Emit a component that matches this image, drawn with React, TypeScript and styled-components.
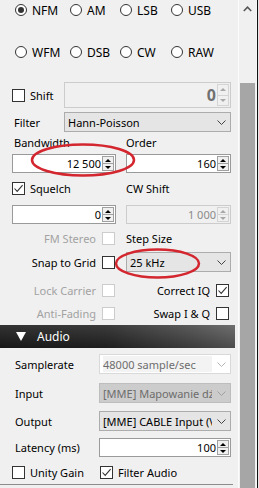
import React, { ReactElement } from 'react'
import styled, { createGlobalStyle } from 'styled-components'

const GlobalStyle = createGlobalStyle`
  html, body {
    margin: 0;
    padding: 0;
    background: #f0f0f0;
  }
  body {
    font-family: 'Noto Sans', 'Open Sans', sans-serif;
    font-size: 11px;
    color: #000;
  }
`

const Window = styled.div`
  width: 259px;
  height: 488px;
  display: flex;
  overflow: hidden;
  background: #f0f0f0;
`

const Panel = styled.div`
  position: relative;
  width: 238px;
  display: flex;
  flex-direction: column;
`

const Row = styled.div<{ $top: number; $h: number }>`
  margin-top: ${(p) => p.$top}px;
  height: ${(p) => p.$h}px;
  flex-shrink: 0;
`

const RadioRow = styled(Row)`
  display: grid;
  grid-template-columns: 55px 50px 51px 1fr;
  align-items: center;
  padding-left: 15px;
  font-size: 12px;
`

const RadioItem = styled.div`
  display: flex;
  align-items: center;
  gap: 5px;
  white-space: nowrap;
`

const RadioCircle = styled.span<{ $checked?: boolean }>`
  box-sizing: border-box;
  width: 12px;
  height: 12px;
  border: 1px solid #333;
  border-radius: 50%;
  background: #fff;
  display: inline-flex;
  align-items: center;
  justify-content: center;
  &::after {
    content: '';
    display: ${(p) => (p.$checked ? 'block' : 'none')};
    width: 6px;
    height: 6px;
    border-radius: 50%;
    background: #333;
  }
`

const ShiftRow = styled(Row)`
  display: grid;
  grid-template-columns: 52px 167px;
  padding-left: 12px;
`

const FilterRow = styled(Row)`
  display: grid;
  grid-template-columns: 52px 167px;
  padding-left: 12px;
  align-items: center;
`

const Pair = styled(Row)`
  display: grid;
  grid-template-columns: 104px 105px;
  column-gap: 10px;
  padding-left: 12px;
  align-items: center;
`

const FieldLabel = styled.span<{ $inset?: number; $muted?: boolean }>`
  padding-left: ${(p) => p.$inset ?? 0}px;
  color: ${(p) => (p.$muted ? '#a2a2a2' : '#000')};
  white-space: nowrap;
`

const CheckLabel = styled.label`
  display: flex;
  align-items: center;
  gap: 5px;
  white-space: nowrap;
`

const RightCheck = styled.label<{ $inset: number }>`
  display: flex;
  align-items: center;
  justify-content: flex-end;
  gap: 6px;
  padding-right: ${(p) => p.$inset}px;
  white-space: nowrap;
`

const CheckBox = styled.span<{ $disabled?: boolean }>`
  box-sizing: border-box;
  width: 13px;
  height: 13px;
  flex-shrink: 0;
  border: 1px solid ${(p) => (p.$disabled ? '#cccccc' : '#333')};
  background: #fff;
  display: inline-flex;
  align-items: center;
  justify-content: center;
`

const NumField = styled.div<{ $disabled?: boolean }>`
  box-sizing: border-box;
  height: 100%;
  display: flex;
  align-items: stretch;
  border: 1px solid ${(p) => (p.$disabled ? '#cccccc' : '#9a9a9a')};
  background: ${(p) => (p.$disabled ? '#f0f0f0' : '#fff')};
  padding: 1px;
`

const NumValue = styled.span<{ $disabled?: boolean; $big?: boolean }>`
  flex: 1;
  display: flex;
  align-items: center;
  justify-content: flex-end;
  padding-right: 1px;
  color: ${(p) => (p.$big ? '#707070' : p.$disabled ? '#8a8a8a' : '#000')};
  font-size: ${(p) => (p.$big ? '16px' : '11px')};
  font-weight: ${(p) => (p.$big ? 700 : 400)};
`

const Spinner = styled.div<{ $disabled?: boolean }>`
  width: 12px;
  display: flex;
  flex-direction: column;
  border: 1px solid ${(p) => (p.$disabled ? '#d4d4d4' : '#a0a0a0')};
  background: #f0f0f0;
  box-sizing: border-box;
`

const SpinHalf = styled.div<{ $disabled?: boolean; $down?: boolean }>`
  flex: 1;
  display: flex;
  align-items: center;
  justify-content: center;
  ${(p) => (p.$down ? '' : `border-bottom: 1px solid ${p.$disabled ? '#d4d4d4' : '#a0a0a0'};`)}
  &::after {
    content: '';
    width: 0;
    height: 0;
    border-left: 3px solid transparent;
    border-right: 3px solid transparent;
    ${(p) =>
      p.$down
        ? `border-top: 3px solid ${p.$disabled ? '#a8a8a8' : '#000'};`
        : `border-bottom: 3px solid ${p.$disabled ? '#a8a8a8' : '#000'};`}
  }
`

const Combo = styled.div<{ $variant?: 'normal' | 'disabled' | 'soft' }>`
  box-sizing: border-box;
  height: 100%;
  display: flex;
  align-items: center;
  padding-left: 3px;
  overflow: hidden;
  white-space: nowrap;
  border: 1px solid
    ${(p) => (p.$variant === 'disabled' ? '#bdbdbd' : p.$variant === 'soft' ? '#d9d9d9' : '#acacac')};
  background: ${(p) => (p.$variant === 'disabled' ? '#cccccc' : p.$variant === 'soft' ? '#fff' : '#e5e5e5')};
  color: ${(p) => (p.$variant === 'normal' || !p.$variant ? '#000' : '#6d6d6d')};
`

const ComboText = styled.span<{ $shaded?: boolean }>`
  flex: 1;
  overflow: hidden;
  align-self: stretch;
  display: flex;
  align-items: center;
  margin: 1px 0;
  background: ${(p) => (p.$shaded ? '#f3f3f3' : 'transparent')};
`

const ComboArrow = styled.span`
  width: 18px;
  display: flex;
  align-items: center;
  justify-content: center;
  flex-shrink: 0;
`

const AudioHeader = styled.div`
  margin-top: 3px;
  margin-right: 3px;
  height: 23px;
  flex-shrink: 0;
  display: flex;
  align-items: center;
  gap: 11px;
  padding-left: 16px;
  color: #fff;
  font-size: 12px;
  background: linear-gradient(180deg, rgba(255, 255, 255, 0.1), rgba(0, 0, 0, 0.18)),
    linear-gradient(90deg, #1c1c1c 0%, #252525 45%, #474747 80%, #5e5e5e 100%);
`

const Triangle = styled.span`
  width: 0;
  height: 0;
  border-left: 5px solid transparent;
  border-right: 5px solid transparent;
  border-top: 9px solid #fff;
`

const AudioRow = styled(Row)`
  display: grid;
  grid-template-columns: 87px 132px;
  padding-left: 12px;
  align-items: center;
`

const BottomRow = styled(Row)`
  display: grid;
  grid-template-columns: 88px 1fr;
  padding-left: 12px;
  align-items: center;
`

const BottomLine = styled.div`
  margin-top: 3px;
  margin-right: 5px;
  border-top: 1px solid #8c8c8c;
`

const Marks = styled.svg`
  position: absolute;
  left: 0;
  top: 0;
  pointer-events: none;
`

const ScrollBar = styled.div`
  width: 17px;
  display: flex;
  flex-direction: column;
  border-left: 1px solid #fbfbfb;
  background: #f0f0f0;
`

const ScrollArrow = styled.div`
  height: 17px;
  display: flex;
  align-items: center;
  justify-content: center;
  flex-shrink: 0;
`

const ScrollTrack = styled.div`
  flex: 1;
  padding-top: 66px;
  display: flex;
`

const ScrollThumb = styled.div`
  flex: 1;
  margin: 0 1px;
  background: #a6a6a6;
`

const Edge = styled.div`
  width: 3px;
  background: linear-gradient(90deg, #f7f7f7 0 1px, #111 1px 2px, #e8e8e8 2px);
`

const Radio = ({ label, checked }: { label: string; checked?: boolean }): ReactElement => (
  <RadioItem>
    <RadioCircle $checked={checked} />
    {label}
  </RadioItem>
)

const Check = ({ checked, disabled }: { checked?: boolean; disabled?: boolean }): ReactElement => (
  <CheckBox $disabled={disabled}>
    {checked && (
      <svg width="11" height="11" viewBox="0 0 11 11">
        <path d="M1.5 5.5 L4.2 8.4 L9.6 2.2" fill="none" stroke="#333" strokeWidth="1.1" />
      </svg>
    )}
  </CheckBox>
)

const Num = ({ value, disabled, big }: { value: string; disabled?: boolean; big?: boolean }): ReactElement => (
  <NumField $disabled={disabled}>
    <NumValue $disabled={disabled} $big={big}>
      {value}
    </NumValue>
    <Spinner $disabled={disabled}>
      <SpinHalf $disabled={disabled} />
      <SpinHalf $disabled={disabled} $down />
    </Spinner>
  </NumField>
)

const Chevron = ({ color = '#444' }: { color?: string }): ReactElement => (
  <svg width="9" height="5" viewBox="0 0 9 5">
    <path d="M0.5 0.5 L4.5 4.5 L8.5 0.5" fill="none" stroke={color} strokeWidth="1" />
  </svg>
)

const Select = ({
  value,
  variant = 'normal',
  arrow
}: {
  value: string
  variant?: 'normal' | 'disabled' | 'soft'
  arrow?: string
}): ReactElement => (
  <Combo $variant={variant}>
    <ComboText $shaded={variant === 'soft'}>{value}</ComboText>
    <ComboArrow>
      <Chevron color={arrow} />
    </ComboArrow>
  </Combo>
)

export default function App(): ReactElement {
  return (
    <>
      <GlobalStyle />
      <Window>
        <Panel>
          <RadioRow $top={0} $h={20}>
            <Radio label="NFM" checked />
            <Radio label="AM" />
            <Radio label="LSB" />
            <Radio label="USB" />
          </RadioRow>
          <RadioRow $top={22} $h={20}>
            <Radio label="WFM" />
            <Radio label="DSB" />
            <Radio label="CW" />
            <Radio label="RAW" />
          </RadioRow>

          <ShiftRow $top={20} $h={22}>
            <CheckLabel>
              <Check />
              Shift
            </CheckLabel>
            <Num value="0" disabled big />
          </ShiftRow>

          <FilterRow $top={8} $h={20}>
            <FieldLabel $inset={2}>Filter</FieldLabel>
            <Select value="Hann-Poisson" />
          </FilterRow>

          <Pair $top={3} $h={15}>
            <FieldLabel $inset={2}>Bandwidth</FieldLabel>
            <FieldLabel>Order</FieldLabel>
          </Pair>
          <Pair $top={4} $h={18}>
            <Num value="12 500" />
            <Num value="160" />
          </Pair>

          <Pair $top={7} $h={18}>
            <CheckLabel>
              <Check checked />
              Squelch
            </CheckLabel>
            <FieldLabel>CW Shift</FieldLabel>
          </Pair>
          <Pair $top={8} $h={18}>
            <Num value="0" />
            <Num value="1 000" disabled />
          </Pair>

          <Pair $top={6} $h={18}>
            <RightCheck $inset={1}>
              <FieldLabel $muted>FM Stereo</FieldLabel>
              <Check disabled />
            </RightCheck>
            <FieldLabel>Step Size</FieldLabel>
          </Pair>
          <Pair $top={5} $h={20}>
            <RightCheck $inset={1}>
              Snap to Grid
              <Check />
            </RightCheck>
            <Select value="25 kHz" />
          </Pair>
          <Pair $top={9} $h={18}>
            <RightCheck $inset={1}>
              <FieldLabel $muted>Lock Carrier</FieldLabel>
              <Check disabled />
            </RightCheck>
            <RightCheck $inset={2}>
              Correct IQ
              <Check checked />
            </RightCheck>
          </Pair>
          <Pair $top={5} $h={18}>
            <RightCheck $inset={1}>
              <FieldLabel $muted>Anti-Fading</FieldLabel>
              <Check disabled />
            </RightCheck>
            <RightCheck $inset={2}>
              Swap I &amp; Q
              <Check />
            </RightCheck>
          </Pair>

          <AudioHeader>
            <Triangle />
            Audio
          </AudioHeader>

          <AudioRow $top={6} $h={20}>
            <FieldLabel $inset={3}>Samplerate</FieldLabel>
            <Select value="48000 sample/sec" variant="soft" arrow="#b5b5b5" />
          </AudioRow>
          <AudioRow $top={9} $h={20}>
            <FieldLabel $inset={3}>Input</FieldLabel>
            <Select value="[MME] Mapowanie dźwięku" variant="disabled" arrow="#a0a0a0" />
          </AudioRow>
          <AudioRow $top={8} $h={20}>
            <FieldLabel $inset={3}>Output</FieldLabel>
            <Select value="[MME] CABLE Input (VB-Audio)" />
          </AudioRow>
          <AudioRow $top={7} $h={18}>
            <FieldLabel $inset={3}>Latency (ms)</FieldLabel>
            <Num value="100" />
          </AudioRow>
          <BottomRow $top={7} $h={18}>
            <CheckLabel>
              <Check />
              Unity Gain
            </CheckLabel>
            <CheckLabel>
              <Check checked />
              Filter Audio
            </CheckLabel>
          </BottomRow>
          <BottomLine />

          <Marks width="238" height="488" viewBox="0 0 238 488">
            <ellipse cx="83" cy="160" rx="51" ry="15.5" fill="none" stroke="#d3262e" strokeWidth="2.5" />
            <ellipse cx="157.5" cy="263.5" rx="41.5" ry="14" fill="none" stroke="#d3262e" strokeWidth="2.5" />
          </Marks>
        </Panel>

        <ScrollBar>
          <ScrollArrow>
            <svg width="9" height="6" viewBox="0 0 9 6">
              <path d="M0.8 5 L4.5 1.2 L8.2 5" fill="none" stroke="#555" strokeWidth="1.5" />
            </svg>
          </ScrollArrow>
          <ScrollTrack>
            <ScrollThumb />
          </ScrollTrack>
        </ScrollBar>
        <Edge />
      </Window>
    </>
  )
}
